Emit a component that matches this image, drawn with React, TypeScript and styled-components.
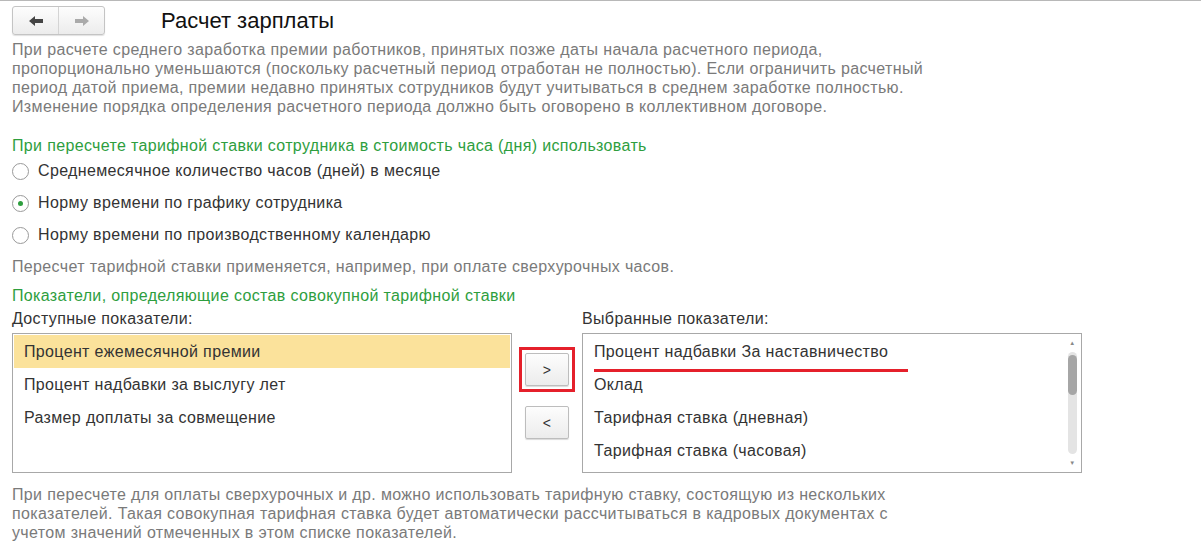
import React from "react";
import styled, { createGlobalStyle } from "styled-components";

const Global = createGlobalStyle`
	body {
		margin: 0;
		background: #fff;
		font-family: "Liberation Sans", Arial, sans-serif;
		color: #333;
	}
`;

const Page = styled.div`
	width: 1201px;
	height: 545px;
	overflow: hidden;
	border-top: 1px solid #b8b8b8;
	box-sizing: border-box;
`;

const Header = styled.div`
	display: flex;
	align-items: center;
	height: 39px;
	padding-left: 12px;
	background: #fff;
	position: relative;
	z-index: 1;
`;

const NavGroup = styled.div`
	display: flex;
	height: 27px;
	border: 1px solid #c4c4c4;
	border-radius: 3px;
	background: linear-gradient(#fdfdfd, #ececec);
	box-shadow: 0 1px 1px rgba(0, 0, 0, 0.12);
`;

const NavBtn = styled.div<{ $last?: boolean }>`
	width: 45px;
	display: flex;
	align-items: center;
	justify-content: center;
	border-left: ${p => (p.$last ? "1px solid #d4d4d4" : "none")};
`;

const Title = styled.div`
	margin-left: 56px;
	font-size: 22px;
	color: #111;
`;

const Content = styled.div`
	padding: 0 12px;
	margin-top: 0px;
	font-size: 16px;
	letter-spacing: 0.35px;
	white-space: nowrap;
`;

const Note = styled.p<{ $mt?: number }>`
	margin: ${p => p.$mt ?? 0}px 0 0;
	color: #7a7a7a;
	line-height: 19px;
`;

const Heading = styled.div<{ $mt: number }>`
	margin-top: ${p => p.$mt}px;
	color: #2e9e3e;
	line-height: 19px;
`;

const RadioRow = styled.label`
	display: flex;
	align-items: center;
	gap: 9px;
	height: 32px;
	color: #333;
`;

const Radio = styled.span<{ $on?: boolean }>`
	width: 17px;
	height: 17px;
	border-radius: 50%;
	border: 1px solid #9a9a9a;
	box-sizing: border-box;
	background: #fff;
	display: flex;
	align-items: center;
	justify-content: center;
	&::after {
		content: "";
		width: 5px;
		height: 5px;
		border-radius: 50%;
		background: ${p => (p.$on ? "#2e9e3e" : "transparent")};
	}
`;

const Lists = styled.div`
	display: flex;
	align-items: flex-start;
	margin-top: 4px;
`;

const Column = styled.div`
	display: flex;
	flex-direction: column;
	width: 500px;
`;

const Label = styled.div`
	color: #333;
	line-height: 19px;
	margin-bottom: 5px;
`;

const ListBox = styled.div`
	height: 140px;
	border: 1px solid #a8a8a8;
	box-sizing: border-box;
	padding: 1px;
	position: relative;
`;

const Item = styled.div<{ $sel?: boolean }>`
	height: 33px;
	display: flex;
	align-items: center;
	padding-left: 10px;
	color: #333;
	background: ${p => (p.$sel ? "#fbe29b" : "transparent")};
`;

const Underlined = styled.span`
	position: relative;
	&::after {
		content: "";
		position: absolute;
		left: 0;
		right: -20px;
		bottom: -11px;
		height: 3px;
		background: #e5202b;
	}
`;

const Middle = styled.div`
	width: 70px;
	display: flex;
	flex-direction: column;
	align-items: center;
	padding-top: 38px;
	gap: 8px;
`;

const Highlight = styled.div<{ $on?: boolean }>`
	padding: 3px;
	border: 3px solid ${p => (p.$on ? "#e5202b" : "transparent")};
`;

const MoveBtn = styled.div`
	width: 44px;
	height: 33px;
	box-sizing: border-box;
	border: 1px solid #bdbdbd;
	border-radius: 2px;
	background: linear-gradient(#fdfdfd, #ececec);
	box-shadow: 0 1px 1px rgba(0, 0, 0, 0.15);
	display: flex;
	align-items: center;
	justify-content: center;
	font-size: 14px;
	color: #333;
`;

const Scroll = styled.div`
	position: absolute;
	right: 4px;
	top: 6px;
	bottom: 6px;
	width: 9px;
	display: flex;
	flex-direction: column;
	align-items: center;
	font-size: 6px;
	color: #888;
`;

const Track = styled.div`
	flex: 1;
	width: 9px;
	margin: 6px 0;
	border-radius: 5px;
	background: #e4e4e4;
	&::before {
		content: "";
		display: block;
		margin-top: 3px;
		height: 40px;
		border-radius: 5px;
		background: #a6a6a6;
	}
`;

const Arrow = ({ color }: { color: string }) => (
	<svg width="16" height="12" viewBox="0 0 16 12">
		<path d="M1 6 L7 1 V4 H15 V8 H7 V11 Z" fill={color} />
	</svg>
);

export default function App() {
	return (
		<Page>
			<Global />
			<Header>
				<NavGroup>
					<NavBtn>
						<Arrow color="#444" />
					</NavBtn>
					<NavBtn $last>
						<span style={{ transform: "scaleX(-1)", display: "flex" }}>
							<Arrow color="#aaa" />
						</span>
					</NavBtn>
				</NavGroup>
				<Title>Расчет зарплаты</Title>
			</Header>
			<Content>
				<Note>
					При расчете среднего заработка премии работников, принятых позже даты начала расчетного периода,
					<br />
					пропорционально уменьшаются (поскольку расчетный период отработан не полностью). Если ограничить расчетный
					<br />
					период датой приема, премии недавно принятых сотрудников будут учитываться в среднем заработке полностью.
					<br />
					Изменение порядка определения расчетного периода должно быть оговорено в коллективном договоре.
				</Note>
				<Heading $mt={20}>При пересчете тарифной ставки сотрудника в стоимость часа (дня) использовать</Heading>
				<RadioRow>
					<Radio />
					Среднемесячное количество часов (дней) в месяце
				</RadioRow>
				<RadioRow>
					<Radio $on />
					Норму времени по графику сотрудника
				</RadioRow>
				<RadioRow>
					<Radio />
					Норму времени по производственному календарю
				</RadioRow>
				<Note $mt={6}>Пересчет тарифной ставки применяется, например, при оплате сверхурочных часов.</Note>
				<Heading $mt={10}>Показатели, определяющие состав совокупной тарифной ставки</Heading>
				<Lists>
					<Column>
						<Label>Доступные показатели:</Label>
						<ListBox>
							<Item $sel>Процент ежемесячной премии</Item>
							<Item>Процент надбавки за выслугу лет</Item>
							<Item>Размер доплаты за совмещение</Item>
						</ListBox>
					</Column>
					<Middle>
						<Highlight $on>
							<MoveBtn>&gt;</MoveBtn>
						</Highlight>
						<Highlight>
							<MoveBtn>&lt;</MoveBtn>
						</Highlight>
					</Middle>
					<Column>
						<Label>Выбранные показатели:</Label>
						<ListBox>
							<Item>
								<Underlined>Процент надбавки За наставничество</Underlined>
							</Item>
							<Item>Оклад</Item>
							<Item>Тарифная ставка (дневная)</Item>
							<Item>Тарифная ставка (часовая)</Item>
							<Scroll>
								▲
								<Track />
								▼
							</Scroll>
						</ListBox>
					</Column>
				</Lists>
				<Note $mt={12}>
					При пересчете для оплаты сверхурочных и др. можно использовать тарифную ставку, состоящую из нескольких
					<br />
					показателей. Такая совокупная тарифная ставка будет автоматически рассчитываться в кадровых документах с
					<br />
					учетом значений отмеченных в этом списке показателей.
				</Note>
			</Content>
		</Page>
	);
}
